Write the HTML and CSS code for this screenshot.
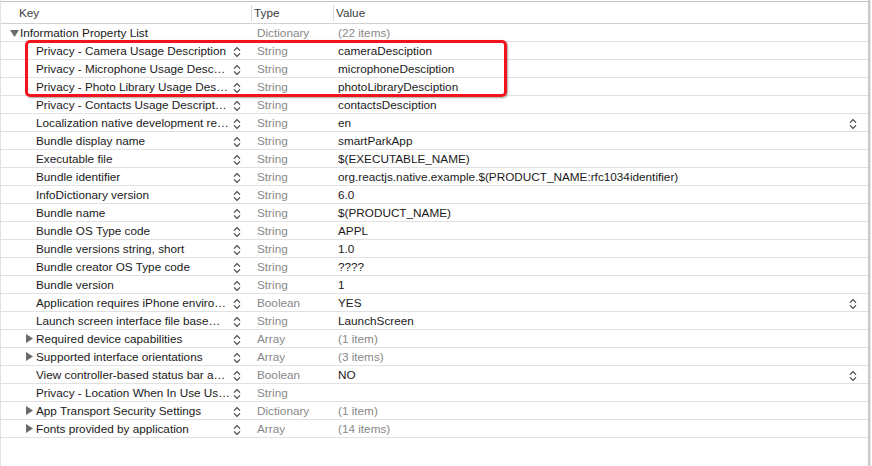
FILE: index.html
```html
<!DOCTYPE html>
<html>
<head>
<meta charset="utf-8">
<link rel="stylesheet" href="styles.css">
</head>
<body>
<div class="plist">
  <div class="header">
    <div class="hcell hkey">Key</div>
    <div class="hcell htype">Type</div>
    <div class="hcell hval">Value</div>
  </div>

  <div class="row">
    <div class="key root"><svg class="tri" width="9" height="7" viewBox="0 0 9 7"><polygon points="0,0 9,0 4.5,7" fill="#6a6a6a"/></svg><span class="ktext">Information Property List</span></div>
    <div class="type">Dictionary</div><div class="val muted">(22 items)</div>
  </div>

  <div class="row"><div class="key child"><span class="ktext">Privacy - Camera Usage Description</span><svg class="step" width="8" height="12" viewBox="0 0 8 12"><path d="M1 4.6 L4 1.6 L7 4.6 M1 7.4 L4 10.4 L7 7.4"/></svg></div><div class="type">String</div><div class="val">cameraDesciption</div></div>
  <div class="row"><div class="key child"><span class="ktext">Privacy - Microphone Usage Desc…</span><svg class="step" width="8" height="12" viewBox="0 0 8 12"><path d="M1 4.6 L4 1.6 L7 4.6 M1 7.4 L4 10.4 L7 7.4"/></svg></div><div class="type">String</div><div class="val">microphoneDesciption</div></div>
  <div class="row"><div class="key child"><span class="ktext">Privacy - Photo Library Usage Des…</span><svg class="step" width="8" height="12" viewBox="0 0 8 12"><path d="M1 4.6 L4 1.6 L7 4.6 M1 7.4 L4 10.4 L7 7.4"/></svg></div><div class="type">String</div><div class="val">photoLibraryDesciption</div></div>
  <div class="row"><div class="key child"><span class="ktext">Privacy - Contacts Usage Descript…</span><svg class="step" width="8" height="12" viewBox="0 0 8 12"><path d="M1 4.6 L4 1.6 L7 4.6 M1 7.4 L4 10.4 L7 7.4"/></svg></div><div class="type">String</div><div class="val">contactsDesciption</div></div>
  <div class="row"><div class="key child"><span class="ktext">Localization native development re…</span><svg class="step" width="8" height="12" viewBox="0 0 8 12"><path d="M1 4.6 L4 1.6 L7 4.6 M1 7.4 L4 10.4 L7 7.4"/></svg></div><div class="type">String</div><div class="val"><span class="vtext">en</span><svg class="step" width="8" height="12" viewBox="0 0 8 12"><path d="M1 4.6 L4 1.6 L7 4.6 M1 7.4 L4 10.4 L7 7.4"/></svg></div></div>
  <div class="row"><div class="key child"><span class="ktext">Bundle display name</span><svg class="step" width="8" height="12" viewBox="0 0 8 12"><path d="M1 4.6 L4 1.6 L7 4.6 M1 7.4 L4 10.4 L7 7.4"/></svg></div><div class="type">String</div><div class="val">smartParkApp</div></div>
  <div class="row"><div class="key child"><span class="ktext">Executable file</span><svg class="step" width="8" height="12" viewBox="0 0 8 12"><path d="M1 4.6 L4 1.6 L7 4.6 M1 7.4 L4 10.4 L7 7.4"/></svg></div><div class="type">String</div><div class="val">$(EXECUTABLE_NAME)</div></div>
  <div class="row"><div class="key child"><span class="ktext">Bundle identifier</span><svg class="step" width="8" height="12" viewBox="0 0 8 12"><path d="M1 4.6 L4 1.6 L7 4.6 M1 7.4 L4 10.4 L7 7.4"/></svg></div><div class="type">String</div><div class="val">org.reactjs.native.example.$(PRODUCT_NAME:rfc1034identifier)</div></div>
  <div class="row"><div class="key child"><span class="ktext">InfoDictionary version</span><svg class="step" width="8" height="12" viewBox="0 0 8 12"><path d="M1 4.6 L4 1.6 L7 4.6 M1 7.4 L4 10.4 L7 7.4"/></svg></div><div class="type">String</div><div class="val">6.0</div></div>
  <div class="row"><div class="key child"><span class="ktext">Bundle name</span><svg class="step" width="8" height="12" viewBox="0 0 8 12"><path d="M1 4.6 L4 1.6 L7 4.6 M1 7.4 L4 10.4 L7 7.4"/></svg></div><div class="type">String</div><div class="val">$(PRODUCT_NAME)</div></div>
  <div class="row"><div class="key child"><span class="ktext">Bundle OS Type code</span><svg class="step" width="8" height="12" viewBox="0 0 8 12"><path d="M1 4.6 L4 1.6 L7 4.6 M1 7.4 L4 10.4 L7 7.4"/></svg></div><div class="type">String</div><div class="val">APPL</div></div>
  <div class="row"><div class="key child"><span class="ktext">Bundle versions string, short</span><svg class="step" width="8" height="12" viewBox="0 0 8 12"><path d="M1 4.6 L4 1.6 L7 4.6 M1 7.4 L4 10.4 L7 7.4"/></svg></div><div class="type">String</div><div class="val">1.0</div></div>
  <div class="row"><div class="key child"><span class="ktext">Bundle creator OS Type code</span><svg class="step" width="8" height="12" viewBox="0 0 8 12"><path d="M1 4.6 L4 1.6 L7 4.6 M1 7.4 L4 10.4 L7 7.4"/></svg></div><div class="type">String</div><div class="val">????</div></div>
  <div class="row"><div class="key child"><span class="ktext">Bundle version</span><svg class="step" width="8" height="12" viewBox="0 0 8 12"><path d="M1 4.6 L4 1.6 L7 4.6 M1 7.4 L4 10.4 L7 7.4"/></svg></div><div class="type">String</div><div class="val">1</div></div>
  <div class="row"><div class="key child"><span class="ktext">Application requires iPhone enviro…</span><svg class="step" width="8" height="12" viewBox="0 0 8 12"><path d="M1 4.6 L4 1.6 L7 4.6 M1 7.4 L4 10.4 L7 7.4"/></svg></div><div class="type">Boolean</div><div class="val"><span class="vtext">YES</span><svg class="step" width="8" height="12" viewBox="0 0 8 12"><path d="M1 4.6 L4 1.6 L7 4.6 M1 7.4 L4 10.4 L7 7.4"/></svg></div></div>
  <div class="row"><div class="key child"><span class="ktext">Launch screen interface file base…</span><svg class="step" width="8" height="12" viewBox="0 0 8 12"><path d="M1 4.6 L4 1.6 L7 4.6 M1 7.4 L4 10.4 L7 7.4"/></svg></div><div class="type">String</div><div class="val">LaunchScreen</div></div>
  <div class="row"><div class="key child fold"><svg class="tri" width="7" height="9" viewBox="0 0 7 9"><polygon points="0,0 7,4.5 0,9" fill="#6a6a6a"/></svg><span class="ktext">Required device capabilities</span><svg class="step" width="8" height="12" viewBox="0 0 8 12"><path d="M1 4.6 L4 1.6 L7 4.6 M1 7.4 L4 10.4 L7 7.4"/></svg></div><div class="type">Array</div><div class="val muted">(1 item)</div></div>
  <div class="row"><div class="key child fold"><svg class="tri" width="7" height="9" viewBox="0 0 7 9"><polygon points="0,0 7,4.5 0,9" fill="#6a6a6a"/></svg><span class="ktext">Supported interface orientations</span><svg class="step" width="8" height="12" viewBox="0 0 8 12"><path d="M1 4.6 L4 1.6 L7 4.6 M1 7.4 L4 10.4 L7 7.4"/></svg></div><div class="type">Array</div><div class="val muted">(3 items)</div></div>
  <div class="row"><div class="key child"><span class="ktext">View controller-based status bar a…</span><svg class="step" width="8" height="12" viewBox="0 0 8 12"><path d="M1 4.6 L4 1.6 L7 4.6 M1 7.4 L4 10.4 L7 7.4"/></svg></div><div class="type">Boolean</div><div class="val"><span class="vtext">NO</span><svg class="step" width="8" height="12" viewBox="0 0 8 12"><path d="M1 4.6 L4 1.6 L7 4.6 M1 7.4 L4 10.4 L7 7.4"/></svg></div></div>
  <div class="row"><div class="key child"><span class="ktext">Privacy - Location When In Use Us…</span><svg class="step" width="8" height="12" viewBox="0 0 8 12"><path d="M1 4.6 L4 1.6 L7 4.6 M1 7.4 L4 10.4 L7 7.4"/></svg></div><div class="type">String</div><div class="val"></div></div>
  <div class="row"><div class="key child fold"><svg class="tri" width="7" height="9" viewBox="0 0 7 9"><polygon points="0,0 7,4.5 0,9" fill="#6a6a6a"/></svg><span class="ktext">App Transport Security Settings</span><svg class="step" width="8" height="12" viewBox="0 0 8 12"><path d="M1 4.6 L4 1.6 L7 4.6 M1 7.4 L4 10.4 L7 7.4"/></svg></div><div class="type">Dictionary</div><div class="val muted">(1 item)</div></div>
  <div class="row"><div class="key child fold"><svg class="tri" width="7" height="9" viewBox="0 0 7 9"><polygon points="0,0 7,4.5 0,9" fill="#6a6a6a"/></svg><span class="ktext">Fonts provided by application</span><svg class="step" width="8" height="12" viewBox="0 0 8 12"><path d="M1 4.6 L4 1.6 L7 4.6 M1 7.4 L4 10.4 L7 7.4"/></svg></div><div class="type">Array</div><div class="val muted">(14 items)</div></div>

  <div class="highlight"></div>
</div>
</body>
</html>
```

FILE: styles.css
```css
html, body {
  margin: 0;
  padding: 0;
  background: #ffffff;
}

body {
  font-family: "Liberation Sans", Arial, sans-serif;
  font-size: 11.75px;
  color: #1a1a1a;
  height: 466px;
  overflow: hidden;
}

.plist {
  position: relative;
  width: 867px;
  height: 465px;
  padding-top: 1px;
  border-left: 1px solid #e2e2e2;
  border-right: 2px solid #c9c9c9;
  box-shadow: 1px 0 0 #ececec;
}

.header {
  display: grid;
  grid-template-columns: 250px 82px 1fr;
  height: 21px;
  border-top: 1px solid #c4c4c4;
  border-bottom: 1px solid #d2d2d2;
  align-items: center;
}

.hcell {
  color: #3c3c3c;
  line-height: 14px;
}

.hkey {
  padding-left: 18px;
}

.htype,
.hval {
  border-left: 1px solid #dadada;
  padding-left: 2px;
  height: 16px;
  display: flex;
  align-items: center;
}

.row {
  display: grid;
  grid-template-columns: 250px 82px 1fr;
  height: 17px;
  border-bottom: 1px solid #e1e1e1;
  align-items: center;
}

.key {
  display: flex;
  align-items: center;
  height: 17px;
  padding-right: 10px;
  overflow: hidden;
}

.key.root {
  padding-left: 9px;
}

.key.root .tri {
  margin-right: 1px;
  margin-top: 1px;
}

.key.child {
  padding-left: 35px;
}

.key.child.fold {
  padding-left: 25px;
}

.key.child.fold .tri {
  margin-right: 3px;
}

.ktext {
  flex: 1;
  white-space: nowrap;
  overflow: hidden;
}

.step {
  flex: none;
  fill: none;
  stroke: #444444;
  stroke-width: 1.2;
  margin-top: 2px;
}

.type {
  color: #888888;
  padding-left: 6px;
  white-space: nowrap;
}

.val {
  padding-left: 5px;
  white-space: nowrap;
  display: flex;
  align-items: center;
  padding-right: 11px;
}

.val.muted {
  color: #888888;
}

.vtext {
  flex: 1;
}

.highlight {
  position: absolute;
  left: 24px;
  top: 40px;
  width: 476px;
  height: 51px;
  border: 3px solid #f2141c;
  border-radius: 5px;
  box-shadow: 1px 1px 2px rgba(0, 0, 0, 0.35);
}
```
